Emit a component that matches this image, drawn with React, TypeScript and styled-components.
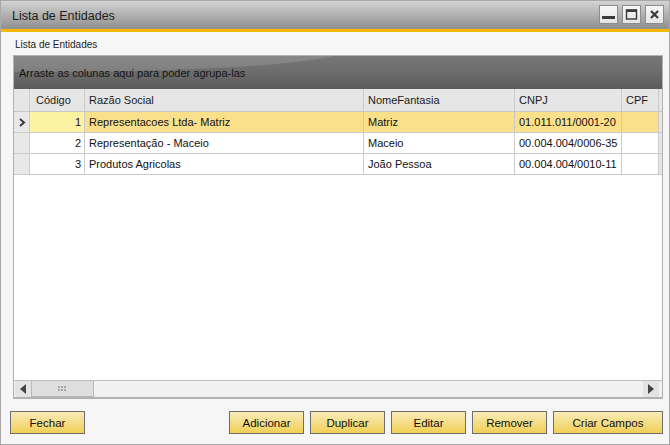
import styled, { createGlobalStyle } from "styled-components";

const GlobalStyle = createGlobalStyle`
  html, body {
    margin: 0;
    padding: 0;
    background: #f6f6f6;
  }
  * {
    box-sizing: border-box;
  }
`;

type Align = "left" | "right";

interface Column {
  key: string;
  label: string;
  width: number;
  align: Align;
}

const columns: Column[] = [
  { key: "codigo", label: "Código", width: 55, align: "right" },
  { key: "razao", label: "Razão Social", width: 279, align: "left" },
  { key: "fantasia", label: "NomeFantasia", width: 151, align: "left" },
  { key: "cnpj", label: "CNPJ", width: 107, align: "left" },
  { key: "cpf", label: "CPF", width: 37, align: "left" },
];

const rows: Record<string, string>[] = [
  { codigo: "1", razao: "Representacoes Ltda- Matriz", fantasia: "Matriz", cnpj: "01.011.011/0001-20", cpf: "" },
  { codigo: "2", razao: "Representação - Maceio", fantasia: "Maceio", cnpj: "00.004.004/0006-35", cpf: "" },
  { codigo: "3", razao: "Produtos Agricolas", fantasia: "João Pessoa", cnpj: "00.004.004/0010-11", cpf: "" },
];

const template = `16px ${columns.map((c) => `${c.width}px`).join(" ")} 1fr`;

function App() {
  return (
    <>
      <GlobalStyle />
      <Window>
        <TitleBar>
          <Title>Lista de Entidades</Title>
          <Controls>
            <ControlButton aria-label="Minimizar">
              <svg width="13" height="13" viewBox="0 0 13 13">
                <rect x="0" y="8" width="13" height="3" fill="#3a3a3a" />
              </svg>
            </ControlButton>
            <ControlButton aria-label="Maximizar">
              <svg width="13" height="13" viewBox="0 0 13 13">
                <rect x="1.5" y="2" width="10" height="9" fill="none" stroke="#3a3a3a" strokeWidth="1.4" />
                <rect x="1" y="1.5" width="11" height="2.5" fill="#3a3a3a" />
              </svg>
            </ControlButton>
            <ControlButton aria-label="Fechar">
              <svg width="13" height="13" viewBox="0 0 13 13">
                <path d="M3 3 L10 10 M10 3 L3 10" stroke="#3a3a3a" strokeWidth="2.2" />
              </svg>
            </ControlButton>
          </Controls>
        </TitleBar>

        <Body>
          <Caption>Lista de Entidades</Caption>

          <Grid>
            <GroupPanel>
              <GroupText>Arraste as colunas aqui para poder agrupa-las</GroupText>
            </GroupPanel>

            <HeaderRow>
              <HeaderCell />
              {columns.map((c) => (
                <HeaderCell key={c.key} $first={c.key === "codigo"}>
                  {c.label}
                </HeaderCell>
              ))}
              <Filler />
            </HeaderRow>

            <GridBody>
              {rows.map((r, i) => (
                <Row key={r.codigo}>
                  <Indicator>
                    {i === 0 && (
                      <svg width="8" height="9" viewBox="0 0 8 9">
                        <path d="M2 1 L6 4.5 L2 8" fill="none" stroke="#3c3c3c" strokeWidth="2" />
                      </svg>
                    )}
                  </Indicator>
                  {columns.map((c) => (
                    <Cell
                      key={c.key}
                      $align={c.align}
                      $selected={i === 0}
                      $focused={i === 0 && c.key === "codigo"}
                    >
                      {r[c.key]}
                    </Cell>
                  ))}
                  <Filler />
                </Row>
              ))}
            </GridBody>

            <ScrollBar>
              <ScrollArrow>
                <svg width="6" height="10" viewBox="0 0 6 10">
                  <path d="M6 0 L0 5 L6 10 Z" fill="#444" />
                </svg>
              </ScrollArrow>
              <ScrollThumb>
                <svg width="9" height="6" viewBox="0 0 9 6">
                  {[0, 3, 6].map((x) =>
                    [0, 3].map((y) => (
                      <rect key={`${x}-${y}`} x={x} y={y} width="2" height="2" fill="#a8a8a8" />
                    ))
                  )}
                </svg>
              </ScrollThumb>
              <ScrollTrack />
              <ScrollArrow>
                <svg width="6" height="10" viewBox="0 0 6 10">
                  <path d="M0 0 L6 5 L0 10 Z" fill="#444" />
                </svg>
              </ScrollArrow>
            </ScrollBar>
          </Grid>

          <Footer>
            <Button>Fechar</Button>
            <Spacer />
            <ButtonGroup>
              <Button>Adicionar</Button>
              <Button>Duplicar</Button>
              <Button>Editar</Button>
              <Button>Remover</Button>
              <Button $width={110}>Criar Campos</Button>
            </ButtonGroup>
          </Footer>
        </Body>
      </Window>
    </>
  );
}

export default App;

const Window = styled.div`
  width: 670px;
  height: 445px;
  display: flex;
  flex-direction: column;
  border: 1px solid #a9a9a9;
  background: #f6f6f6;
  font-family: "Liberation Sans", Arial, sans-serif;
  color: #141414;
`;

const TitleBar = styled.div`
  height: 31px;
  flex: none;
  display: flex;
  align-items: center;
  justify-content: space-between;
  padding: 0 5px 0 11px;
  background: linear-gradient(#d3d3d3 0%, #b4b4b4 45%, #8f8f8f 100%);
  border-bottom: 3px solid #f7b800;
`;

const Title = styled.div`
  font-size: 12.5px;
  color: #1c1c1c;
  padding-top: 1px;
`;

const Controls = styled.div`
  display: flex;
  gap: 4px;
  padding-bottom: 2px;
`;

const ControlButton = styled.div`
  width: 19px;
  height: 19px;
  display: flex;
  align-items: center;
  justify-content: center;
  border: 1px solid #8c8c8c;
  background: linear-gradient(#f8f8f8, #e4e4e4);
`;

const Body = styled.div`
  flex: 1;
  display: flex;
  flex-direction: column;
  padding: 0 6px 10px 12px;
  min-height: 0;
`;

const Caption = styled.div`
  height: 23px;
  flex: none;
  display: flex;
  align-items: center;
  padding: 1px 0 0 2px;
  font-size: 10px;
  color: #222;
`;

const Grid = styled.div`
  flex: 1;
  display: flex;
  flex-direction: column;
  min-height: 0;
  border: 1px solid #b2b2b2;
  border-bottom-width: 2px;
  background: #fff;
  overflow: hidden;
`;

const GroupPanel = styled.div`
  position: relative;
  height: 33px;
  flex: none;
  display: flex;
  align-items: center;
  padding-left: 5px;
  background: linear-gradient(#777 0%, #6c6c6c 50%, #5c5c5c 100%);
  overflow: hidden;

  &::before {
    content: "";
    position: absolute;
    left: -260px;
    top: -34px;
    width: 600px;
    height: 50px;
    border-radius: 50%;
    background: rgba(255, 255, 255, 0.13);
  }
`;

const GroupText = styled.span`
  position: relative;
  font-size: 11px;
  color: #141414;
  padding-top: 1px;
`;

const HeaderRow = styled.div`
  display: grid;
  grid-template-columns: ${template};
  height: 23px;
  flex: none;
  background: #e6e6e6;
  border-bottom: 1px solid #c6c6c6;
`;

const HeaderCell = styled.div<{ $first?: boolean }>`
  display: flex;
  align-items: center;
  padding-left: ${({ $first }) => ($first ? "6px" : "4px")};
  font-size: 11px;
  color: #1a1a1a;
  white-space: nowrap;
  overflow: hidden;
  border-right: 1px solid #cbcbcb;
`;

const Filler = styled.div`
  background: #e6e6e6;
`;

const GridBody = styled.div`
  flex: 1;
  background: #fff;
`;

const Row = styled.div`
  display: grid;
  grid-template-columns: ${template};
  height: 21px;
  border-bottom: 1px solid #cbcbcb;
`;

const Indicator = styled.div`
  display: flex;
  align-items: center;
  justify-content: center;
  background: #e8e8e8;
  border-right: 1px solid #cbcbcb;
`;

const Cell = styled.div<{ $align: Align; $selected: boolean; $focused: boolean }>`
  display: flex;
  align-items: center;
  justify-content: ${({ $align }) => ($align === "right" ? "flex-end" : "flex-start")};
  padding: 0 3px 0 4px;
  font-size: 11px;
  color: #111;
  white-space: nowrap;
  overflow: hidden;
  border-right: 1px solid #cbcbcb;
  background: ${({ $selected, $focused }) =>
    $focused ? "#fdf1a2" : $selected ? "#fbe08b" : "#fff"};
`;

const ScrollBar = styled.div`
  height: 17px;
  flex: none;
  display: flex;
  align-items: stretch;
  border-top: 1px solid #bdbdbd;
  background: #f1f1f1;
  padding: 0 3px 0 1px;
`;

const ScrollArrow = styled.div`
  width: 16px;
  display: flex;
  align-items: center;
  justify-content: center;
  background: #e3e3e3;
`;

const ScrollThumb = styled.div`
  width: 63px;
  display: flex;
  align-items: center;
  justify-content: center;
  background: #dedede;
  border: 1px solid #b9b9b9;
  border-top: none;
`;

const ScrollTrack = styled.div`
  flex: 1;
`;

const Footer = styled.div`
  height: 23px;
  flex: none;
  display: flex;
  margin: 12px 0 0 -3px;
`;

const Spacer = styled.div`
  flex: 1;
`;

const ButtonGroup = styled.div`
  display: flex;
  gap: 6px;
`;

const Button = styled.button<{ $width?: number }>`
  width: ${({ $width }) => $width ?? 75}px;
  height: 23px;
  padding: 0;
  border: 1px solid #6e6e6e;
  background: linear-gradient(#f8ebb8 0%, #f4dc84 55%, #f1cf55 100%);
  font-family: "Liberation Sans", Arial, sans-serif;
  font-size: 11.5px;
  color: #111;
  cursor: pointer;
`;
